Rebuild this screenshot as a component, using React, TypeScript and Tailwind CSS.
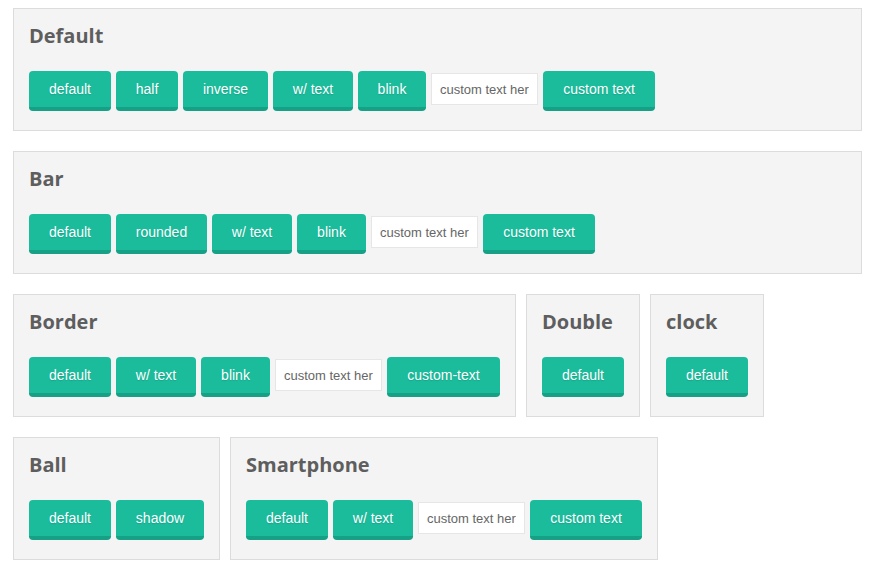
import type { ReactNode } from 'react';

type Item = { label: string; w: number } | { input: true };

const btn = (label: string, w: number): Item => ({ label, w });
const field: Item = { input: true };

function Button({ label, w }: { label: string; w: number }) {
  return (
    <button
      style={{ width: w }}
      className="h-[40px] shrink-0 rounded-[4px] border-b-4 border-[#16a085] bg-[#1abc9c] text-[14px] leading-[36px] text-white [font-family:'Liberation_Sans',Arial,sans-serif] [text-shadow:0_1px_1px_rgba(0,0,0,0.12)]"
    >
      {label}
    </button>
  );
}

function Field() {
  return (
    <input
      readOnly
      value="custom text here"
      className="mt-[2px] h-[32px] w-[107px] shrink-0 border border-[#e6e6e6] bg-white px-[8px] text-[13px] text-[#666] outline-none [font-family:'Liberation_Sans',Arial,sans-serif]"
    />
  );
}

function Panel({ title, items, full }: { title: string; items: Item[]; full?: boolean }) {
  return (
    <section
      className={`${full ? 'w-full' : 'w-fit'} border border-[#dcdcdc] bg-[#f4f4f4] px-[15px] pt-[13px] pb-[19px]`}
    >
      <h2 className="mb-[21px] text-[20px] leading-[28px] font-bold text-[#5e5e5e] [font-family:'Open_Sans',sans-serif]">
        {title}
      </h2>
      <div className="flex items-start gap-[5px]">
        {items.map((it, i) => ('input' in it ? <Field key={i} /> : <Button key={i} label={it.label} w={it.w} />))}
      </div>
    </section>
  );
}

function Row({ children }: { children: ReactNode }) {
  return <div className="flex gap-[10px]">{children}</div>;
}

export default function App() {
  return (
    <div className="flex min-h-screen flex-col gap-[20px] bg-white pt-[8px] pr-[8px] pl-[13px]">
      <Panel
        full
        title="Default"
        items={[btn('default', 82), btn('half', 62), btn('inverse', 85), btn('w/ text', 80), btn('blink', 68), field, btn('custom text', 112)]}
      />
      <Panel
        full
        title="Bar"
        items={[btn('default', 82), btn('rounded', 91), btn('w/ text', 80), btn('blink', 69), field, btn('custom text', 112)]}
      />
      <Row>
        <Panel
          title="Border"
          items={[btn('default', 82), btn('w/ text', 80), btn('blink', 69), field, btn('custom-text', 113)]}
        />
        <Panel title="Double" items={[btn('default', 82)]} />
        <Panel title="clock" items={[btn('default', 82)]} />
      </Row>
      <Row>
        <Panel title="Ball" items={[btn('default', 82), btn('shadow', 88)]} />
        <Panel
          title="Smartphone"
          items={[btn('default', 82), btn('w/ text', 80), field, btn('custom text', 112)]}
        />
      </Row>
    </div>
  );
}
